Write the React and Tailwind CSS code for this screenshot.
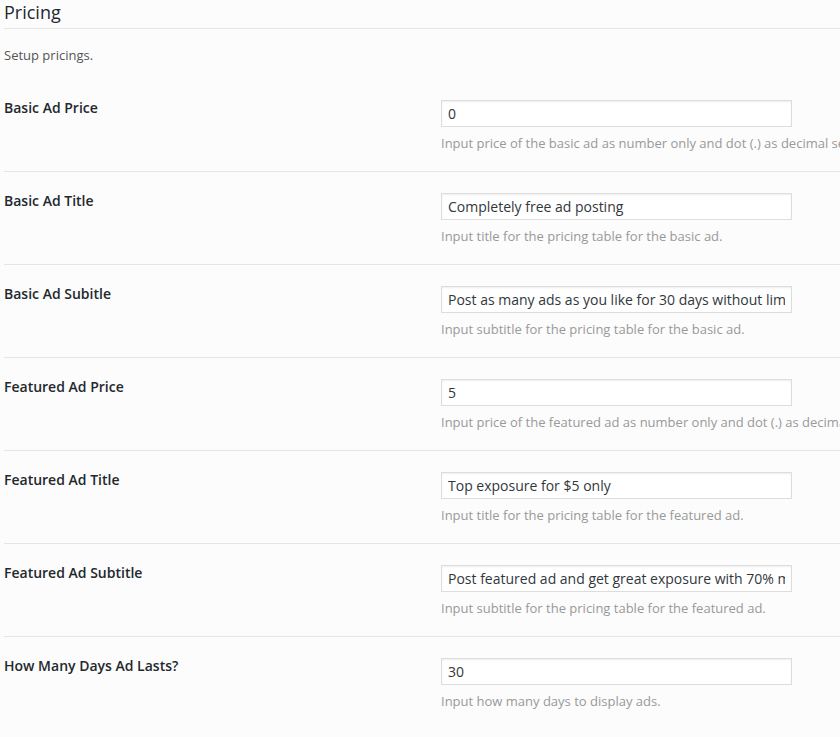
import React from 'react';

const rows = [
  { label: 'Basic Ad Price', value: '0', desc: 'Input price of the basic ad as number only and dot (.) as decimal separator.' },
  { label: 'Basic Ad Title', value: 'Completely free ad posting', desc: 'Input title for the pricing table for the basic ad.' },
  { label: 'Basic Ad Subitle', value: 'Post as many ads as you like for 30 days without limitations', desc: 'Input subtitle for the pricing table for the basic ad.' },
  { label: 'Featured Ad Price', value: '5', desc: 'Input price of the featured ad as number only and dot (.) as decimal separator.' },
  { label: 'Featured Ad Title', value: 'Top exposure for $5 only', desc: 'Input title for the pricing table for the featured ad.' },
  { label: 'Featured Ad Subtitle', value: 'Post featured ad and get great exposure with 70% more views', desc: 'Input subtitle for the pricing table for the featured ad.' },
  { label: 'How Many Days Ad Lasts?', value: '30', desc: 'Input how many days to display ads.' },
];

export default function App() {
  return (
    <div
      className="w-[840px] h-[737px] overflow-hidden bg-[#fcfcfc] pl-[4px]"
      style={{ fontFamily: '"Open Sans", "Noto Sans", sans-serif' }}
    >
      {/* Section header */}
      <div className="border-b border-[#e5e5e5] h-[29px]">
        <h2 className="text-[18px] leading-[24px] text-[#23282d]">Pricing</h2>
      </div>
      <p className="text-[13px] leading-[18px] text-[#555] mt-[17px]">Setup pricings.</p>

      <div className="mt-[15px]">
        {rows.map((row, i) => (
          <div
            key={row.label}
            className={`flex h-[93px] ${i < rows.length - 1 ? 'border-b border-[#e5e5e5]' : ''}`}
          >
            <div className="w-[437px] shrink-0 pt-[19px] text-[14px] leading-[20px] font-semibold text-[#23282d]">
              {row.label}
            </div>
            <div className="pt-[21px] whitespace-nowrap">
              <input
                readOnly
                value={row.value}
                className="block w-[351px] h-[27px] border border-[#ddd] bg-white px-[6px] text-[14px] text-[#32373c] outline-none shadow-[inset_0_1px_2px_rgba(0,0,0,0.07)]"
                style={{ fontFamily: '"Open Sans", "Noto Sans", sans-serif' }}
              />
              <p className="mt-[7px] text-[13px] leading-[18px] text-[#999]">{row.desc}</p>
            </div>
          </div>
        ))}
      </div>
    </div>
  );
}
